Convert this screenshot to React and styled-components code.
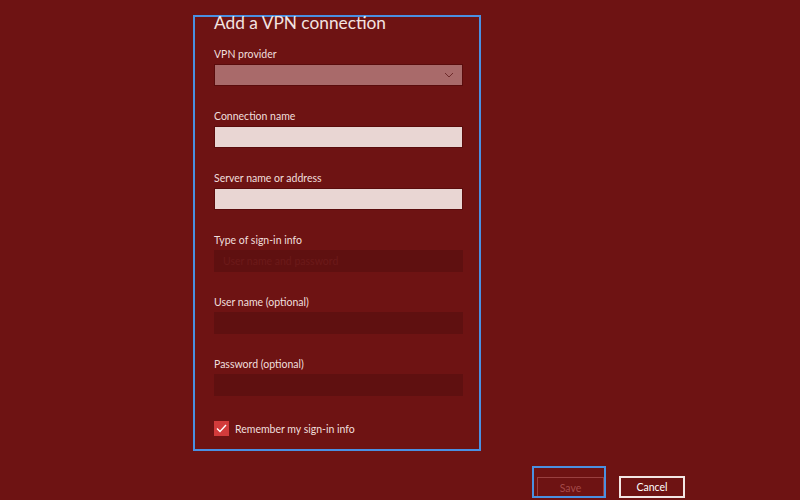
import React from 'react'
import styled, { createGlobalStyle } from 'styled-components'

const GlobalStyle = createGlobalStyle`
  html, body {
    margin: 0;
    padding: 0;
    background: #6e1313;
    font-family: Lato, "Noto Sans", "Liberation Sans", sans-serif;
    overflow: hidden;
  }
`

const Page = styled.div`
  width: 800px;
  height: 500px;
  box-sizing: border-box;
  padding: 15px 0 0 193px;
  display: flex;
  flex-direction: column;
  background: #6e1313;
`

const Dialog = styled.div`
  width: 288px;
  height: 436px;
  box-sizing: border-box;
  border: 2px solid #4a90e2;
  padding: 0 0 0 19px;
  display: flex;
  flex-direction: column;
`

const Title = styled.h1`
  margin: 0;
  font-size: 17.3px;
  font-weight: 400;
  line-height: 12px;
  color: #f3e3e1;
`

const Field = styled.div`
  display: flex;
  flex-direction: column;
  margin-top: ${p => p.$first ? '18px' : '23px'};
`

const Label = styled.label`
  font-size: 10.5px;
  line-height: 14px;
  color: #f0dfdd;
  margin-bottom: 3px;
`

const Box = styled.div`
  width: 249px;
  height: 22px;
  box-sizing: border-box;
  display: flex;
  align-items: center;
  justify-content: space-between;
  padding: 0 8px;
  font-size: 10.5px;
  background: ${p => p.$kind === 'select' ? '#a96a6a' : p.$kind === 'text' ? '#e9d6d3' : '#5f1010'};
  border: 1px solid ${p => p.$kind === 'off' ? '#5f1010' : '#5a0c0c'};
  color: #6c1a1a;
`

const Chevron = styled.svg`
  width: 10px;
  height: 6px;
`

const CheckRow = styled.div`
  display: flex;
  align-items: center;
  gap: 6px;
  margin-top: 25px;
`

const Check = styled.span`
  width: 15px;
  height: 15px;
  background: #d23b3b;
  display: flex;
  align-items: center;
  justify-content: center;
`

const CheckLabel = styled.span`
  font-size: 10.5px;
  color: #f0dfdd;
`

const Footer = styled.div`
  display: flex;
  align-items: flex-start;
  gap: 13px;
  margin: 15px 0 0 339px;
`

const Focus = styled.div`
  width: 74px;
  height: 32px;
  box-sizing: border-box;
  border: 2px solid #4a90e2;
  padding: 8px 0 0 3px;
  overflow: hidden;
`

const Button = styled.button`
  width: ${p => p.$w}px;
  height: 22px;
  box-sizing: border-box;
  background: transparent;
  font-family: inherit;
  font-size: 10.5px;
  padding: 0;
  margin-top: ${p => p.$top || 0}px;
  border: ${p => p.$disabled ? '1px solid #9a4040' : '2px solid #f3e6e4'};
  color: ${p => p.$disabled ? '#a54a4a' : '#ffffff'};
`

const fields = [
  { label: 'VPN provider', kind: 'select' },
  { label: 'Connection name', kind: 'text' },
  { label: 'Server name or address', kind: 'text' },
  { label: 'Type of sign-in info', kind: 'off', placeholder: 'User name and password' },
  { label: 'User name (optional)', kind: 'off' },
  { label: 'Password (optional)', kind: 'off' },
]

export default function App() {
  return (
    <Page>
      <GlobalStyle />
      <Dialog>
        <Title>Add a VPN connection</Title>
        {fields.map((f, i) => (
          <Field key={f.label} $first={i === 0}>
            <Label>{f.label}</Label>
            <Box $kind={f.kind}>
              <span>{f.placeholder || ''}</span>
              {f.kind === 'select' && (
                <Chevron viewBox="0 0 10 6">
                  <path d="M1 1l4 4 4-4" fill="none" stroke="#6e2a2a" strokeWidth="1" />
                </Chevron>
              )}
            </Box>
          </Field>
        ))}
        <CheckRow>
          <Check>
            <svg width="11" height="9" viewBox="0 0 11 9">
              <path d="M1 4.5l3 3L10 1" fill="none" stroke="#fff" strokeWidth="1.4" />
            </svg>
          </Check>
          <CheckLabel>Remember my sign-in info</CheckLabel>
        </CheckRow>
      </Dialog>
      <Footer>
        <Focus>
          <Button $w={67} $disabled>Save</Button>
        </Focus>
        <Button $w={66} $top={10}>Cancel</Button>
      </Footer>
    </Page>
  )
}
